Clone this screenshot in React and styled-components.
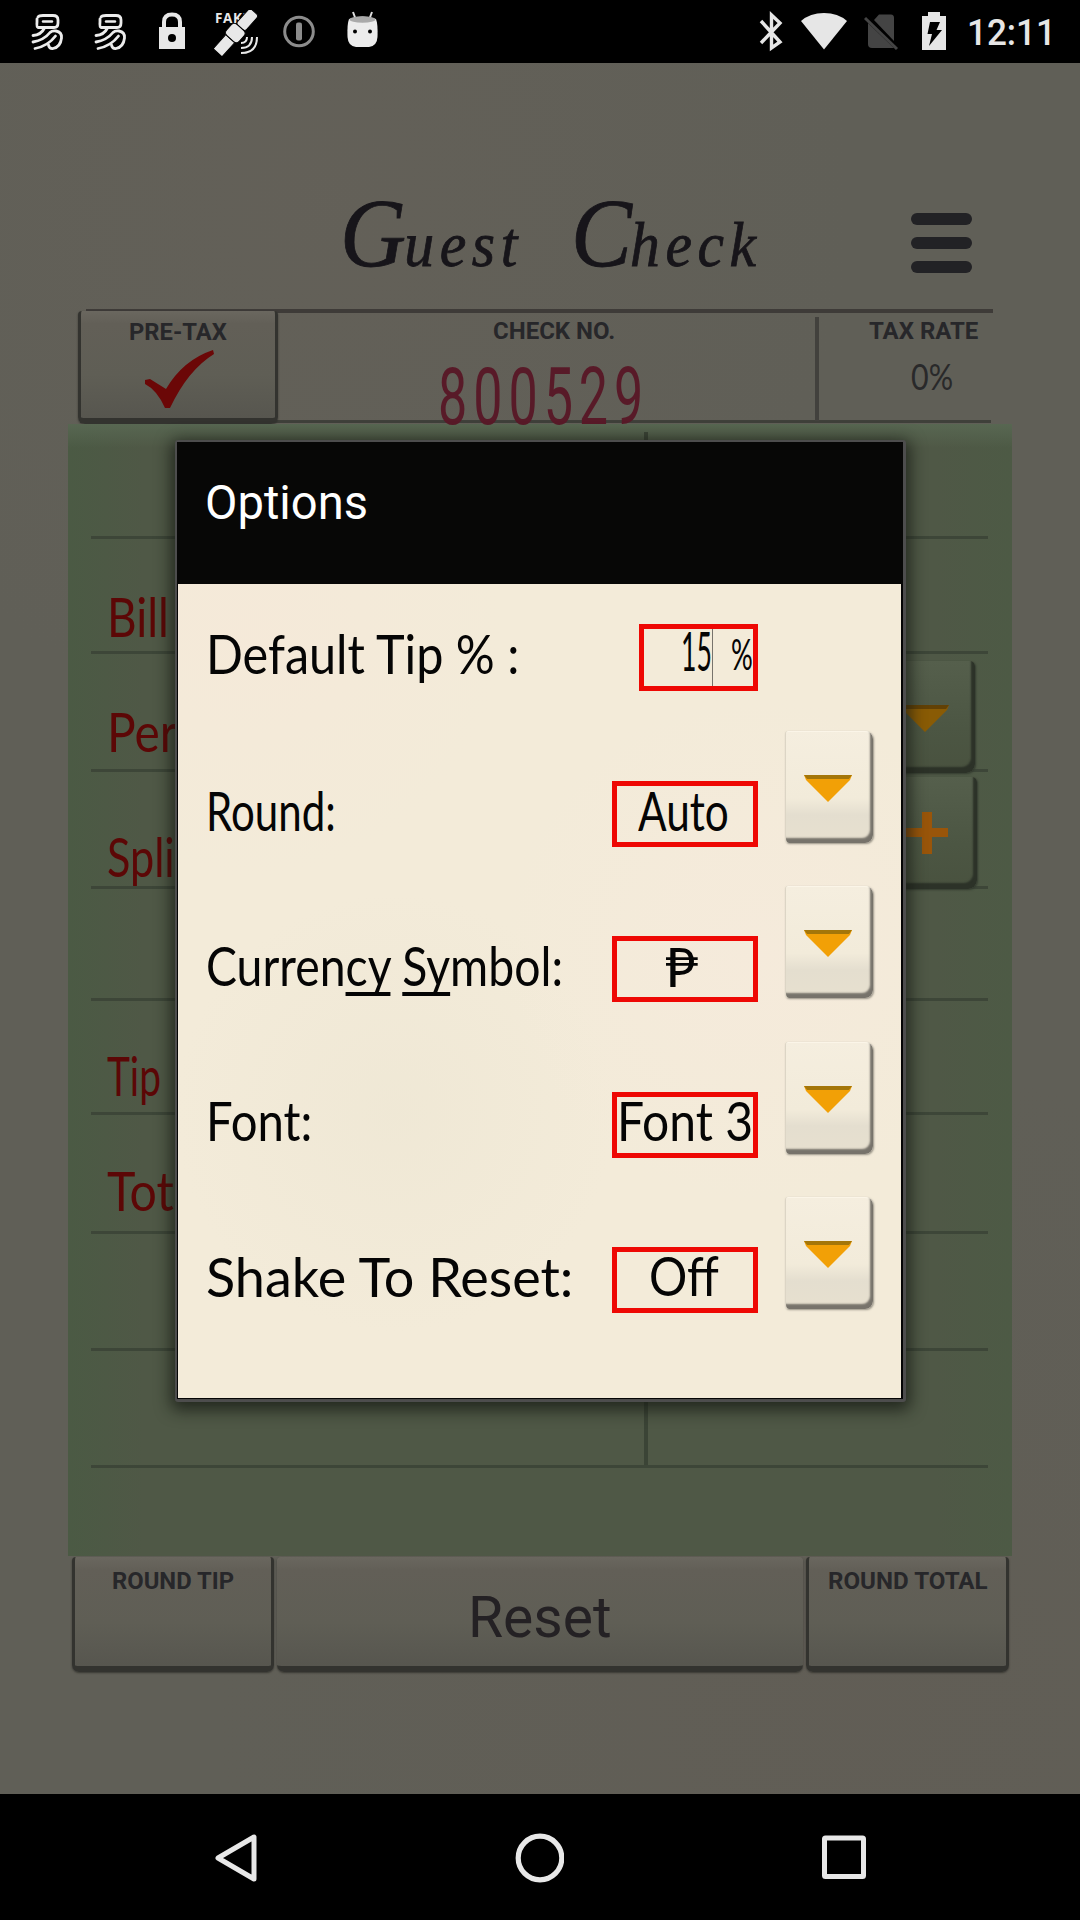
import React, { useLayoutEffect, useRef, useState } from "react";
import styled, { createGlobalStyle } from "styled-components";

const Global = createGlobalStyle`
  * { box-sizing: border-box; }
  html, body { margin: 0; background: #000; }
  body { width: 1080px; height: 1920px; overflow: hidden; font-family: Roboto, sans-serif; }
`;

const hand = `Lato, "Open Sans", "DejaVu Sans", sans-serif`;

/* ---------- text that keeps a set width ---------- */
const FitBox = styled.span`
  display: block;
  flex: none;
  width: ${(p) => p.$w}px;
  white-space: nowrap;
`;
const FitInner = styled.span`
  display: inline-block;
  transform-origin: 0 50%;
`;
function Fit({ w, children }) {
  const ref = useRef(null);
  const [k, setK] = useState(1);
  useLayoutEffect(() => {
    if (ref.current) setK(w / ref.current.offsetWidth);
  }, [w]);
  return (
    <FitBox $w={w}>
      <FitInner ref={ref} style={{ transform: `scaleX(${k})` }}>{children}</FitInner>
    </FitBox>
  );
}

/* ---------- system bars ---------- */
const Screen = styled.div`
  position: relative;
  display: flex;
  flex-direction: column;
  width: 1080px;
  height: 1920px;
  overflow: hidden;
`;
const StatusBar = styled.header`
  display: flex;
  align-items: flex-start;
  height: 63px;
  padding: 10px 24px 0 31px;
  background: #000;
`;
const StatusIcon = styled.svg`
  display: block;
  flex: none;
  width: ${(p) => p.$w}px;
  height: 46px;
  margin-right: ${(p) => p.$gap || 0}px;
`;
const Spacer = styled.div`flex: 1;`;
const Clock = styled.div`
  width: 89px;
  color: #e6e6e6;
  font-size: 37px;
  font-weight: 500;
  line-height: 46px;
`;
const NavBar = styled.nav`
  display: grid;
  grid-template-columns: 43px 50px 46px;
  column-gap: 257px;
  align-items: center;
  height: 126px;
  padding: 2px 0 0 214px;
  background: #000;
`;
const NavIcon = styled.svg`display: block; width: 100%; height: 50px;`;

function Yi({ gap }) {
  return (
    <StatusIcon $w={34} $gap={gap} viewBox="0 0 34 46" fill="none" stroke="#ececec" strokeWidth="2.800" strokeLinecap="round">
      <path d="M7 7Q8 5.500 12 5.500H22Q27 5.500 27 10V13Q27 17.500 23 17.500H7Q5.500 17 6 12V9" />
      <path d="M12 11.500H21" strokeWidth="2.400" />
      <path d="M2 25.500Q10 25 13.500 18" />
      <path d="M2 32Q13 30 19 22.500Q21 20.500 25 21Q31 22 30.500 28Q29.500 37 22 38.500Q18 39 17.500 35" />
      <path d="M4 38.500Q17 36 24.500 26" />
    </StatusIcon>
  );
}

/* ---------- guest check ---------- */
const Page = styled.main`
  display: flex;
  flex-direction: column;
  height: 1731px;
  background:
    radial-gradient(circle at 30% 8%, rgba(104, 98, 90, 0.4), transparent 30%),
    radial-gradient(circle at 80% 95%, rgba(98, 92, 84, 0.5), transparent 35%),
    #605f57;
`;
const Masthead = styled.div`
  display: flex;
  height: 245px;
  padding: 0 108px 0 340px;
`;
const Title = styled.h1`
  display: flex;
  flex: 1;
  gap: 48px;
  margin: 120px 0 0;
  color: #17151a;
  font: italic 400 64px/120px "Liberation Serif", serif;
  letter-spacing: 6px;
  -webkit-text-stroke: 0.8px #17151a;
`;
const Cap = styled.span`font-size: 98px; line-height: 100px; letter-spacing: -2px;`;
const Burger = styled.div`
  display: flex;
  flex-direction: column;
  gap: 12px;
  width: 61px;
  margin-top: 150px;
`;
const Bar = styled.i`height: 12px; border-radius: 6px; background: #222225;`;

const Heads = styled.section`
  display: grid;
  grid-template-columns: 200px 541px 172px;
  height: 116px;
  margin-left: 78px;
  background:
    linear-gradient(#3e3b38, #3e3b38) 8px 1px / 907px 4px no-repeat,
    linear-gradient(#3f403a, #3f403a) 2px 112px / 911px 3px no-repeat;
`;
const Small = styled.div`
  color: #27272a;
  font-size: 24px;
  font-weight: 700;
  line-height: 28px;
  text-align: center;
  display: flex;
  justify-content: center;
`;
const Key = styled.div`
  display: flex;
  flex-direction: column;
  align-items: center;
  padding-top: ${(p) => p.$top}px;
  border-radius: 4px 4px 7px 7px;
  border: solid #33332f;
  border-width: 0 ${(p) => (p.$open ? 0 : 3)}px 6px ${(p) => (p.$open ? 0 : 3)}px;
  background: linear-gradient(#6a675f, #625f57 12%, #5f5e55 60%, #57564f);
  box-shadow: 0 1px 2px rgba(40, 40, 36, 0.7);
`;
const TopKey = styled(Key)`margin-top: 3px;`;
const Tick = styled.svg`display: block; width: 70px; height: 60px; margin: 4px 0 0 4px;`;
const NumberCell = styled.div`
  height: 104px;
  margin-top: 9px;
  padding: 0 0 0 15px;
  border-right: 4px solid #42413d;
`;
const Serial = styled.div`
  width: 206px;
  height: 62px;
  margin: 21px auto 0 145px;
  color: #581a28;
  font: 400 79px/62px Roboto, sans-serif;
  letter-spacing: 9px;
`;
const RateCell = styled.div`padding: 9px 0 0 37px;`;
const Rate = styled.div`
  margin: 12px 0 0 55px;
  color: #29292a;
  font: 400 37px/38px ${hand};
`;

const Slip = styled.section`
  display: grid;
  grid-template-rows: 115px 115px 118px 117px 112px 114px 119px 117px 117px 88px;
  width: 944px;
  margin-left: 68px;
  padding: 0 24px 0 23px;
  background:
    linear-gradient(#3b4436, #3b4436) 576px 8px / 4px 1036px no-repeat,
    linear-gradient(#586752, rgba(84, 96, 76, 0) 24px),
    linear-gradient(90deg, #4b5a44, #4f5846 8%, #4f5846 92%, #4d5a45);
`;
const Line = styled.div`
  display: flex;
  justify-content: space-between;
  align-items: flex-start;
  border-bottom: ${(p) => (p.$last ? 0 : 3)}px solid #3d4638;
`;
const RedInk = styled.div`
  margin: ${(p) => p.$top}px 0 0 16px;
  color: #5c0706;
  font: 400 54px/54px ${hand};
`;
const DimKey = styled.div`
  display: flex;
  align-items: center;
  justify-content: center;
  width: 92px;
  height: 112px;
  margin: ${(p) => p.$top}px ${(p) => p.$right}px 0 0;
  padding-right: 9px;
  border-radius: 5px 5px 9px 5px;
  background: linear-gradient(#555f4c, #4c5643 60%, #49523f);
  box-shadow: inset -4px -6px 2px #2c3228, 1px 1px 2px #343c30;
`;

const Footer = styled.section`
  display: grid;
  grid-template-columns: 202px 526px 203px;
  column-gap: 3px;
  height: 115px;
  margin: 1px 0 0 72px;
`;
const ResetLabel = styled.div`
  color: #242124;
  font-size: 57px;
  line-height: 66px;
`;

/* ---------- options dialog ---------- */
const Dialog = styled.aside`
  position: absolute;
  left: 175px;
  top: 440px;
  width: 731px;
  height: 962px;
  border: solid #4d4d4d;
  border-width: 2px 3px 3px 2px;
  border-radius: 3px;
  background: #050505;
  box-shadow: 0 4px 16px 4px rgba(20, 24, 18, 0.75);
`;
const DialogTitle = styled.h2`
  height: 142px;
  margin: 0;
  padding: 33px 0 0 28px;
  color: #fff;
  background: #070706;
  font-size: 48px;
  font-weight: 400;
  line-height: 56px;
`;
const DialogBody = styled.div`
  display: grid;
  grid-template-rows: 147px 155px 156px 155px 155px;
  width: 723px;
  height: 814px;
  margin-left: 1px;
  padding-left: 28px;
  background:
    radial-gradient(circle at 10% 5%, rgba(246, 232, 217, 0.6), transparent 25%),
    radial-gradient(circle at 80% 45%, rgba(246, 234, 220, 0.7), transparent 35%),
    radial-gradient(circle at 30% 65%, rgba(237, 230, 211, 0.6), transparent 30%),
    #f3ebd9;
`;
const Option = styled.div`
  display: grid;
  grid-template-columns: 406px 146px 27px 88px;
`;
const Label = styled.div`
  padding-top: ${(p) => p.$top}px;
  color: #050505;
  font: 400 54px/54px ${hand};
`;
const Underlined = styled.span`
  text-decoration: underline;
  text-decoration-thickness: 4px;
  text-underline-offset: 6px;
  text-decoration-skip-ink: none;
`;
const Value = styled.div`
  display: flex;
  align-items: flex-start;
  justify-self: end;
  width: ${(p) => p.$w || 146}px;
  height: ${(p) => p.$h || 66}px;
  margin-top: ${(p) => p.$y}px;
  padding-left: ${(p) => p.$left}px;
  border: 5px solid #ee0804;
  color: #050505;
  font: 400 54px/${(p) => p.$lh}px ${hand};
`;
const Caret = styled.i`
  flex: none;
  width: 1px;
  height: 57px;
  margin-right: 18px;
  background: #77736c;
`;
const Percent = styled.span`font-size: 42px; padding-top: 4px;`;
const Drop = styled.button`
  grid-column: 4;
  width: 88px;
  height: 112px;
  padding: 0 3px 0 0;
  border: 0;
  border-left: 1px solid #dcd5c5;
  border-radius: 3px 8px 8px 4px;
  background: linear-gradient(#f5eedf, #f2ebda 60%, #e4decf 75%, #e7e0cf);
  box-shadow: inset -3px -5px 2px #77736b, inset 0 1px 0 #fbf5e8, 1px 1px 2px rgba(90, 86, 78, 0.6);
  display: flex;
  align-items: center;
  justify-content: center;
`;
const Arrow = styled.svg`display: block; width: 48px; height: 27px; margin-top: 2px;`;

function Down({ dim }) {
  return (
    <Arrow viewBox="0 0 48 27">
      <path d="M0 0H48L46 5L24 27L2 5Z" fill={dim ? "#895b05" : "#f2a006"} />
      <path d="M0 0H48L45 4H3Z" fill={dim ? "#624105" : "#a47609"} />
    </Arrow>
  );
}

const options = [
  { label: "Round:", lw: 130, lt: 53, y: 50, left: 21, w: 91, lh: 50, value: "Auto" },
  { label: null, lw: 357, lt: 53, y: 50, left: 48, w: 33, lh: 52, value: "₱" },
  { label: "Font:", lw: 106, lt: 52, y: 50, left: 0, w: 136, lh: 47, value: "Font 3" },
  { label: "Shake To Reset:", lw: 367, lt: 53, y: 50, left: 32, w: 70, lh: 48, value: "Off" },
];

export default function App() {
  return (
    <Screen>
      <Global />
      <StatusBar>
        <Yi gap={29} />
        <Yi gap={31} />
        <StatusIcon $w={26} $gap={29} viewBox="0 0 26 46">
          <path d="M5 18V12Q5 4.500 13 4.500T21 12V18" fill="none" stroke="#e8e8e8" strokeWidth="4" />
          <path d="M0 17H26V39H0Z" fill="#e8e8e8" />
          <circle cx="13" cy="28" r="4" fill="#000" />
        </StatusIcon>
        <StatusIcon $w={44} $gap={25} viewBox="0 0 44 46">
          <text x="1" y="13" fill="#e8e8e8" fontFamily="Open Sans, sans-serif" fontWeight="700" fontSize="13.500" textLength="35">FAKE</text>
          <g fill="#e8e8e8" stroke="#000" strokeWidth="1" transform="rotate(-48 22 23)">
            <rect x="-5" y="16.500" width="19" height="12" />
            <rect x="29" y="16.500" width="21" height="12" rx="3" />
            <rect x="14" y="14" width="15" height="17" rx="4" />
          </g>
          <path d="M27 33Q33 33 33 27M27 38Q38 38 38 27M27 43Q43 43 43 27" fill="none" stroke="#e8e8e8" strokeWidth="2" />
        </StatusIcon>
        <StatusIcon $w={32} $gap={32} viewBox="0 0 32 46">
          <circle cx="16" cy="21.500" r="14.300" fill="none" stroke="#8c8c8c" strokeWidth="3" />
          <rect x="13" y="12.500" width="6" height="18" rx="2" fill="#8c8c8c" />
        </StatusIcon>
        <StatusIcon $w={31} viewBox="0 0 31 46">
          <path d="M6 2L9 10M25 2L22 10" stroke="#ddd" strokeWidth="2" />
          <path d="M2 9Q15.500 4 29 9Q31 14 30.500 27Q30 36 22 37H9Q1 36 .5 27Q0 14 2 9Z" fill="#ececec" />
          <ellipse cx="15.500" cy="9.500" rx="13" ry="3.300" fill="#aaa" />
          <circle cx="8" cy="21.500" r="2" fill="#000" />
          <circle cx="23" cy="21.500" r="2" fill="#000" />
        </StatusIcon>
        <Spacer />
        <StatusIcon $w={24} $gap={18} viewBox="0 0 24 46">
          <path d="M2 11L21 32L12.500 38V5L21 13L2 33" fill="none" stroke="#e6e6e6" strokeWidth="3.400" />
        </StatusIcon>
        <StatusIcon $w={46} $gap={17} viewBox="0 0 46 46">
          <path d="M0 11Q9 3 23 3T46 11L23 39.500Z" fill="#e6e6e6" />
        </StatusIcon>
        <StatusIcon $w={35} $gap={23} viewBox="0 0 35 46">
          <path d="M4 13L30 38Q29 38 8 38Q4 38 4 34Z" fill="#444" />
          <path d="M10 10L15 4.500H27Q30 4.500 30 8V31Z" fill="#444" />
          <path d="M1 8L33 39" stroke="#444" strokeWidth="3" />
        </StatusIcon>
        <StatusIcon $w={24} $gap={21} viewBox="0 0 24 46">
          <path d="M0 6H6V2H18V6H24V40H0Z" fill="#e6e6e6" />
          <path d="M8 12H18L14.500 20H20L7 36L10 24H5.500Z" fill="#000" />
        </StatusIcon>
        <Clock><Fit w={89}>12:11</Fit></Clock>
      </StatusBar>

      <Page>
        <Masthead>
          <Title>
            <Fit w={183}><Cap>G</Cap>uest</Fit>
            <Fit w={191}><Cap>C</Cap>heck</Fit>
          </Title>
          <Burger><Bar /><Bar /><Bar /></Burger>
        </Masthead>
        <Heads>
          <TopKey $top={7}>
            <Small><Fit w={98}>PRE-TAX</Fit></Small>
            <Tick viewBox="0 0 70 60">
              <path d="M0 30L5 29L21 39Q38 10 68 0L69 4Q43 20 25 58H20Q12 40 0 34Z" fill="#6b0707" />
            </Tick>
          </TopKey>
          <NumberCell>
            <Small><Fit w={122}>CHECK NO.</Fit></Small>
            <Serial><Fit w={211}>800529</Fit></Serial>
          </NumberCell>
          <RateCell>
            <Small><Fit w={109}>TAX RATE</Fit></Small>
            <Rate><Fit w={42}>0%</Fit></Rate>
          </RateCell>
        </Heads>
        <Slip>
          <Line />
          <Line><RedInk $top={51}><Fit w={62}>Bill</Fit></RedInk></Line>
          <Line>
            <RedInk $top={51}><Fit w={70}>Per</Fit></RedInk>
            <DimKey $top={7} $right={13}><Down dim /></DimKey>
          </Line>
          <Line>
            <RedInk $top={58}><Fit w={68}>Spli</Fit></RedInk>
            <DimKey $top={5} $right={11}>
              <svg width="44" height="44" viewBox="0 0 44 44">
                <path d="M17 1H27V17H43V26H27V43H17V26H1V17H17Z" fill="#99550a" />
              </svg>
            </DimKey>
          </Line>
          <Line />
          <Line><RedInk $top={48}><Fit w={54}>Tip</Fit></RedInk></Line>
          <Line><RedInk $top={49}><Fit w={67}>Tot</Fit></RedInk></Line>
          <Line />
          <Line />
          <Line $last />
        </Slip>
        <Footer>
          <Key $top={10}><Small><Fit w={122}>ROUND TIP</Fit></Small></Key>
          <Key $top={28} $open><ResetLabel><Fit w={144}>Reset</Fit></ResetLabel></Key>
          <Key $top={10}><Small><Fit w={160}>ROUND TOTAL</Fit></Small></Key>
        </Footer>
      </Page>

      <Dialog>
        <DialogTitle><Fit w={163}>Options</Fit></DialogTitle>
        <DialogBody>
          <Option>
            <Label $top={43}><Fit w={313}>Default Tip % :</Fit></Label>
            <Value $w={119} $h={67} $y={40} $left={37} $lh={43}>
              <Fit w={31}>15</Fit>
              <Caret />
              <Percent><Fit w={22}>%</Fit></Percent>
            </Value>
          </Option>
          {options.map((o) => (
            <Option key={o.value}>
              <Label $top={o.lt}>
                <Fit w={o.lw}>
                  {o.label || (
                    <>Curren<Underlined>cy</Underlined> <Underlined>Sy</Underlined>mbol:</>
                  )}
                </Fit>
              </Label>
              <Value $y={o.y} $left={o.left} $lh={o.lh}><Fit w={o.w}>{o.value}</Fit></Value>
              <Drop><Down /></Drop>
            </Option>
          ))}
        </DialogBody>
      </Dialog>

      <NavBar>
        <NavIcon viewBox="0 0 43 50">
          <path d="M40 4V46L4 25Z" fill="none" stroke="#e8e8e8" strokeWidth="5" strokeLinejoin="round" />
        </NavIcon>
        <NavIcon viewBox="0 0 50 50">
          <circle cx="26" cy="25" r="21.800" fill="none" stroke="#e8e8e8" strokeWidth="5.200" />
        </NavIcon>
        <NavIcon viewBox="0 0 46 50">
          <rect x="3.500" y="5" width="39" height="38.500" rx="1" fill="none" stroke="#e8e8e8" strokeWidth="5" />
        </NavIcon>
      </NavBar>
    </Screen>
  );
}
